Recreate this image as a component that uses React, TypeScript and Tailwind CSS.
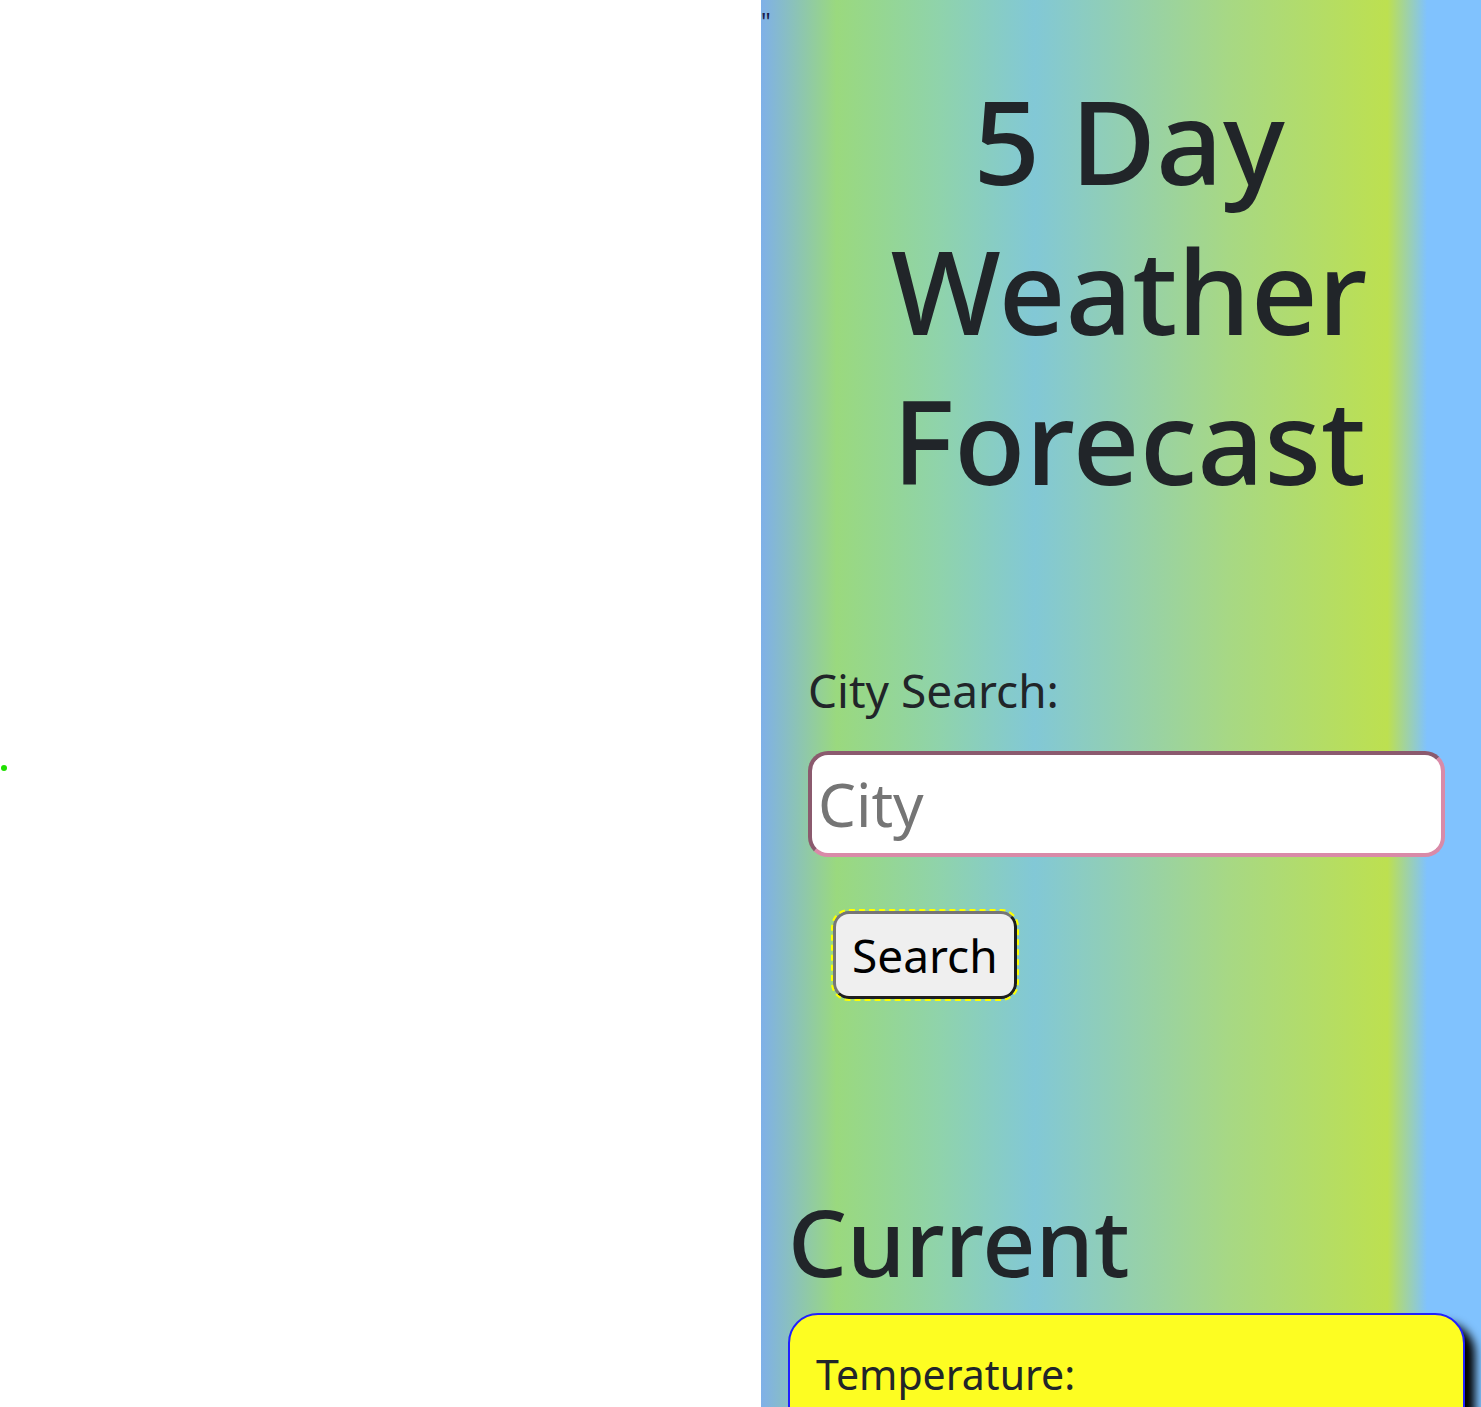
export default function App() {
    return (
        <div className="relative flex w-full min-h-[1407px] overflow-hidden bg-white" style={{ fontFamily: '"Noto Sans", "Open Sans", sans-serif' }}>
            {/* left side is empty */}
            <div className="w-[761px] shrink-0 bg-white"></div>
            <span className="absolute left-[1px] top-[765px] w-[6px] h-[6px] rounded-full bg-[#1fe000]"></span>

            <div className="relative flex-1 h-[1407px] overflow-hidden bg-[linear-gradient(to_right,#7fb0e8_0%,#9ad97e_10.5%,#8fd3ac_25%,#82c8d6_38%,#a7d884_65%,#bde050_87%,#80c2fe_92.5%,#80c2fe_100%)] text-[#212529]">
                <span className="absolute left-[0px] top-[9px] text-[24px] leading-none text-[#1c1c4a]">"</span>

                <h1 className="mt-[65px] pl-[16px] text-center text-[117px] leading-[150px] font-medium">
                    5 Day<br />Weather<br />Forecast
                </h1>

                <div className="mt-[150px] px-[47px]">
                    <label className="block text-[46px] leading-[50px]">City Search:</label>
                    <input
                        type="text"
                        placeholder="City"
                        className="mt-[36px] block w-[637px] h-[106px] rounded-[20px] border-4 border-t-[#8b5a6e] border-l-[#8b5a6e] border-b-[#d98aa8] border-r-[#d98aa8] bg-white px-[6px] text-[60px] placeholder:text-[#757575] outline-none"
                    />
                    <button className="mt-[54px] ml-[25px] h-[88px] px-[16px] rounded-[16px] border-[3px] border-t-[#767676] border-l-[#767676] border-b-[#1e1e1e] border-r-[#1e1e1e] bg-[#efefef] text-[46px] text-black outline-2 outline-dashed outline-[#ffff00]">
                        Search
                    </button>
                </div>

                <div className="mt-[187px] pl-[27px] pr-[16px]">
                    <h2 className="text-[93px] leading-[110px] font-medium">Current</h2>
                    <div className="mt-[17px] h-[200px] rounded-[30px] border-2 border-[#2020ff] bg-[#fdfd22] shadow-[10px_10px_10px_#000] px-[26px] pt-[34px]">
                        <p className="text-[41px] leading-[50px]">Temperature:</p>
                    </div>
                </div>
            </div>
        </div>
    )
}
